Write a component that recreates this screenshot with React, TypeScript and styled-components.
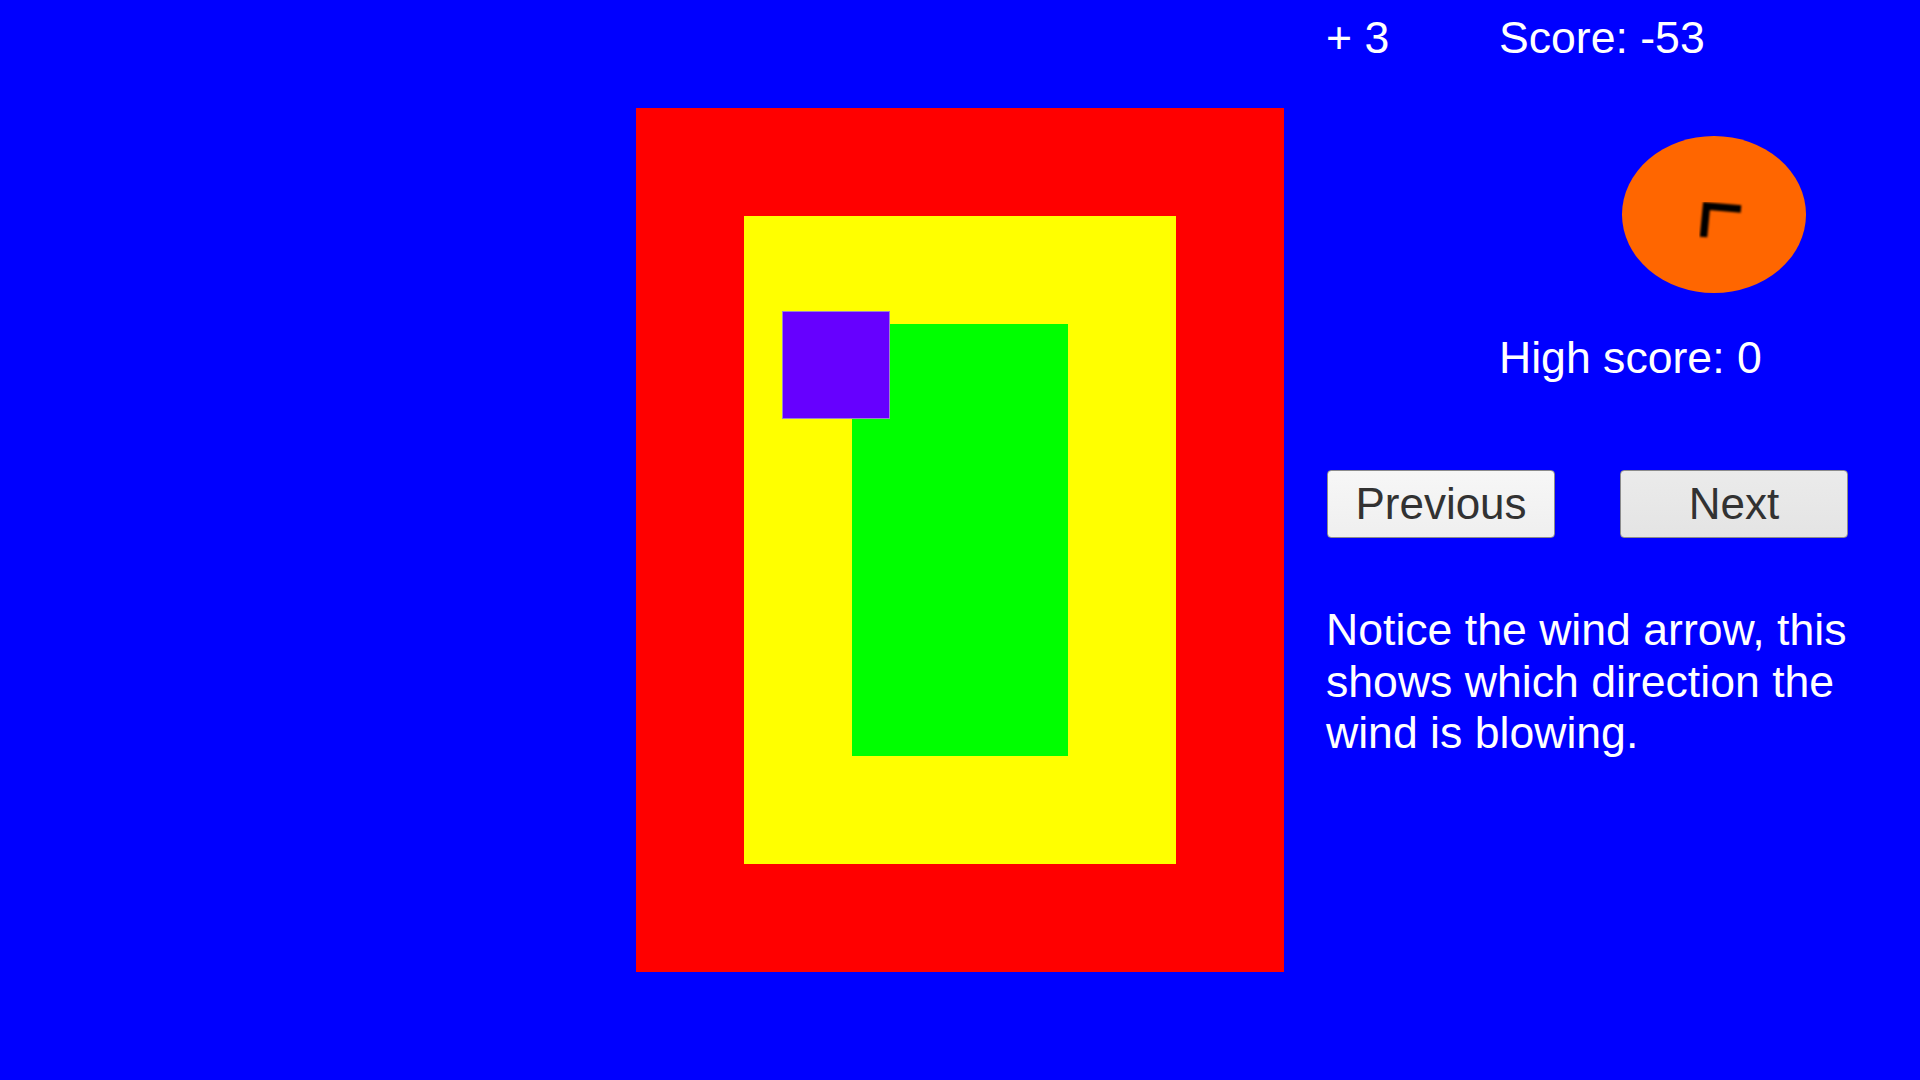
import styled, { createGlobalStyle } from "styled-components"

const Global = createGlobalStyle`
  html, body {
    margin: 0;
    padding: 0;
    background: #0000ff;
  }
  body {
    font-family: "Liberation Sans", Arial, sans-serif;
  }
`

const Screen = styled.div`
  width: 1920px;
  height: 1080px;
  background: #0000ff;
  display: flex;
  align-items: flex-start;
  overflow: hidden;
`

const Board = styled.div`
  margin: 108px 0 0 636px;
  width: 648px;
  height: 864px;
  padding: 108px;
  box-sizing: border-box;
  background: #ff0000;
`

const Field = styled.div`
  position: relative;
  height: 100%;
  padding: 108px;
  box-sizing: border-box;
  background: #ffff00;
`

const Green = styled.div`
  height: 100%;
  background: #00ff00;
`

const Player = styled.div`
  position: absolute;
  left: 38px;
  top: 95px;
  width: 108px;
  height: 108px;
  box-sizing: border-box;
  background: #6600ff;
  border: 1px solid #9a86c8;
`

const Side = styled.div`
  margin-left: 43px;
  width: 560px;
  display: flex;
  flex-direction: column;
  color: #ffffff;
  font-size: 44.6px;
  line-height: 44px;
`

const ScoreRow = styled.div`
  margin: 16px 0 0 -1px;
  display: flex;
`

const Bonus = styled.span`
  width: 173px;
`

const Compass = styled.div`
  margin: 76px 0 0 295px;
  width: 184px;
  height: 157px;
  border-radius: 50%;
  background: #ff6600;
`

const HighScore = styled.div`
  margin: 43px 0 0 172px;
`

const Buttons = styled.div`
  margin-top: 90px;
  display: flex;
  gap: 65px;
`

const NavButton = styled.button<{ $light?: boolean }>`
  width: 228px;
  height: 68px;
  padding: 0;
  border: 1px solid #8c8c8c;
  border-radius: 4px;
  background: ${(p) => (p.$light ? "linear-gradient(#f7f7f7, #efefef)" : "linear-gradient(#ebebeb, #e4e4e4)")};
  color: #323232;
  font-family: "Liberation Sans", Arial, sans-serif;
  font-size: 44px;
  line-height: 1;
`

const Hint = styled.p`
  margin: 66px 0 0 -1px;
  line-height: 51.5px;
`

function App() {
  return (
    <>
      <Global />
      <Screen>
        <Board>
          <Field>
            <Green />
            <Player />
          </Field>
        </Board>
        <Side>
          <ScoreRow>
            <Bonus>+ 3</Bonus>
            <span>Score: -53</span>
          </ScoreRow>
          <Compass>
            <svg width="184" height="157" viewBox="0 0 184 157">
              <defs>
                <filter id="soft">
                  <feGaussianBlur stdDeviation="0.9" />
                </filter>
              </defs>
              <polyline
                points="81.5,101 84.5,70 119,73"
                fill="none"
                stroke="#000"
                strokeWidth="7.5"
                strokeLinejoin="miter"
                filter="url(#soft)"
              />
            </svg>
          </Compass>
          <HighScore>High score: 0</HighScore>
          <Buttons>
            <NavButton $light>Previous</NavButton>
            <NavButton>Next</NavButton>
          </Buttons>
          <Hint>Notice the wind arrow, this shows which direction the wind is blowing.</Hint>
        </Side>
      </Screen>
    </>
  )
}

export default App
